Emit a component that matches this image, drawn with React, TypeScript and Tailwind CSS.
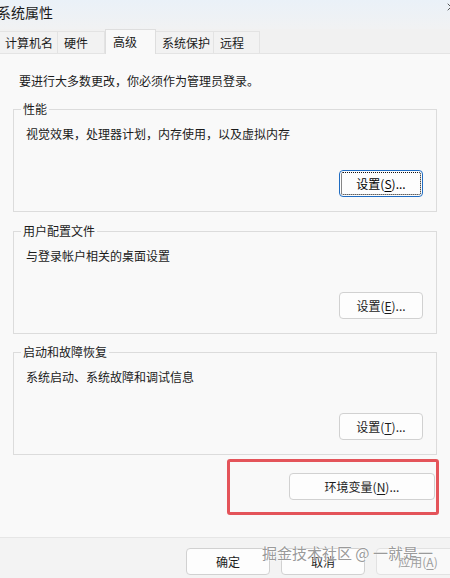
import { X } from "lucide-react";

const font = "font-['Microsoft_YaHei_UI','Noto_Sans_CJK_SC',sans-serif]";

function WinButton({
  label,
  hotkey,
  suffix = "...",
  focused = false,
  disabled = false,
  className = "",
}: {
  label: string;
  hotkey?: string;
  suffix?: string;
  focused?: boolean;
  disabled?: boolean;
  className?: string;
}) {
  return (
    <button
      className={`flex h-[27px] items-center justify-center rounded-[4px] text-[12px] leading-none ${
        focused
          ? "border border-[#1f6cc2] bg-[#fdfdfd] outline-1 outline-dotted outline-[#111] -outline-offset-[3px]"
          : disabled
          ? "border border-[#e2e2e2] bg-[#f9f9f9] text-[#9d9d9d]"
          : "border border-[#d1d1d1] bg-[#fdfdfd] text-[#1b1b1b]"
      } ${className}`}>
      {label}
      {hotkey && (
        <>
          (<span className="underline underline-offset-2">{hotkey}</span>)
        </>
      )}
      {hotkey && suffix}
    </button>
  );
}

function GroupBox({
  title,
  text,
  hotkey,
  focused = false,
  className = "",
}: {
  title: string;
  text: string;
  hotkey: string;
  focused?: boolean;
  className?: string;
}) {
  return (
    <div className={`mx-[13px] border border-[#dcdcdc] pb-[14px] ${className}`}>
      <div className="-mt-[10px] ml-[7px] w-fit bg-[#f9f9f9] px-[2px] text-[12px] leading-[17px] text-[#1b1b1b]">
        {title}
      </div>
      <div className="mt-[8px] pl-3 text-[12px] leading-[17px] text-[#1b1b1b]">{text}</div>
      <div className="mt-[28px] flex justify-end pr-[13px]">
        <WinButton label="设置" hotkey={hotkey} focused={focused} className="w-[84px]" />
      </div>
    </div>
  );
}

const tabs = [
  { name: "计算机名", w: "w-[58px] pl-[5px]" },
  { name: "硬件", w: "w-[47px] pl-[6px]" },
  { name: "高级", w: "w-[51px] pl-[7px]", active: true },
  { name: "系统保护", w: "w-[58px] pl-[6px]" },
  { name: "远程", w: "w-[46px] pl-[6px]" },
];

export default function App() {
  return (
    <div className={`relative h-[578px] w-[450px] overflow-hidden bg-[#f3f3f3] ${font}`}>
      {/* Title bar */}
      <div className="flex h-[29px] items-start justify-between bg-gradient-to-b from-[#eaf1f8] to-[#f1f2f3]">
        <div className="-ml-[3px] mt-[2px] text-[14px] leading-[20px] text-[#1a1a1a]">系统属性</div>
        <X className="-mr-[7px] mt-[1px] h-[12px] w-[12px] text-[#222]" strokeWidth={1.5} />
      </div>

      {/* Tabs */}
      <div className="flex h-[24px] items-end bg-[#f1f1f1]">
        {tabs.map((t) =>
          t.active ? (
            <div
              key={t.name}
              className={`${t.w} relative z-10 -mb-px flex h-[25px] items-start border-x border-t border-[#dedede] bg-[#f9f9f9] pt-[3px] text-[12px] leading-[17px] text-[#1b1b1b]`}>
              {t.name}
            </div>
          ) : (
            <div
              key={t.name}
              className={`${t.w} flex h-[22px] items-center border-r border-t border-[#e3e3e3] bg-[#f2f2f2] text-[12px] leading-[17px] text-[#1b1b1b]`}>
              {t.name}
            </div>
          )
        )}
      </div>

      {/* Panel */}
      <div className="flex h-[484px] flex-col border-t border-[#e4e4e4] bg-[#f9f9f9]">
        <div className="ml-[19px] mt-[18px] text-[12px] leading-[17px] text-[#1b1b1b]">
          要进行大多数更改，你必须作为管理员登录。
        </div>

        <GroupBox className="mt-[20px]" title="性能" text="视觉效果，处理器计划，内存使用，以及虚拟内存" hotkey="S" focused />
        <GroupBox className="mt-[19px]" title="用户配置文件" text="与登录帐户相关的桌面设置" hotkey="E" />
        <GroupBox className="mt-[18px]" title="启动和故障恢复" text="系统启动、系统故障和调试信息" hotkey="T" />

        <div className="ml-auto mr-[11px] mt-[4px] flex w-[212px] justify-end rounded-[3px] border-[3px] border-[#e4545a] pb-[12px] pr-px pt-[11px]">
          <WinButton label="环境变量" hotkey="N" className="w-[146px]" />
        </div>
      </div>

      {/* Footer */}
      <div className="flex gap-[11px] border-t border-[#e6e6e6] bg-[#f3f3f3] pl-[186px] pt-[10px]">
        <WinButton label="确定" className="w-[84px] shrink-0" />
        <WinButton label="取消" className="w-[84px] shrink-0" />
        <WinButton label="应用" hotkey="A" suffix="" disabled className="w-[84px] shrink-0" />
      </div>

      {/* Watermark */}
      <div className="pointer-events-none absolute left-[262px] top-[542px] whitespace-nowrap text-[15px] leading-[22px] text-[#8c8c8c]/90 [text-shadow:0_0_2px_#ffffff,0_0_1px_#ffffff]">
        掘金技术社区 @ 一就是一
      </div>
    </div>
  );
}
